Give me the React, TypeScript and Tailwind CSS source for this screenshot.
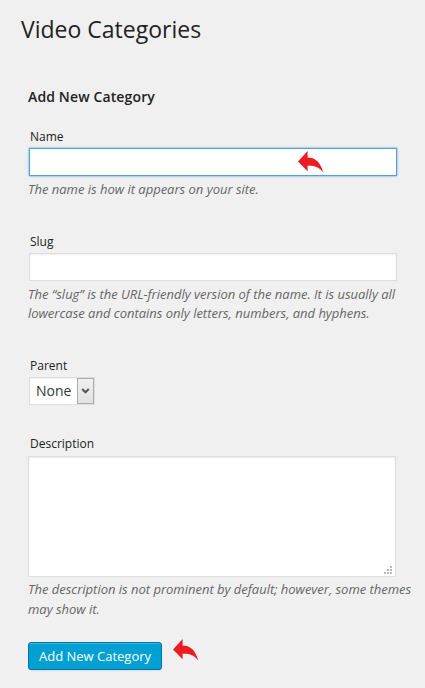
import type { ReactNode } from 'react';

function Arrow({ className }: { className: string }) {
  return (
    <svg className={className} width="26" height="22" viewBox="0 0 26 22" fill="#ed1c24">
      <path d="M0 10.5 L9.6 0 V6.4 C17 6.4 22.5 10.5 25.2 21.6 C21 16 16.5 14.6 9.6 14.8 V20.3 Z" />
    </svg>
  );
}

function Label({ htmlFor, children }: { htmlFor: string; children: ReactNode }) {
  return (
    <label htmlFor={htmlFor} className="ml-0.5 block h-5 text-[12px] leading-5 text-[#222]">
      {children}
    </label>
  );
}

function Hint({ children }: { children: ReactNode }) {
  return (
    <p className="text-[13px] leading-[19px] tracking-[-0.012px] whitespace-nowrap text-[#666] italic">
      {children}
    </p>
  );
}

export default function App() {
  return (
    <main className="h-[688px] w-[425px] overflow-hidden bg-[#f0f0f0] pl-7 font-['Open_Sans',sans-serif]">
      <h1 className="-ml-[7px] pt-[13px] text-[23px] leading-8 font-normal text-[#222]">
        Video Categories
      </h1>
      <h2 className="mt-[42px] text-[14px] leading-5 font-semibold tracking-[0.13px] text-[#222]">
        Add New Category
      </h2>

      <div className="mt-[20px]">
        <Label htmlFor="name">Name</Label>
        <div className="relative mt-[1px] ml-px w-[368px]">
          <input
            id="name"
            className="block h-7 w-full border border-[#5b9dd9] bg-white px-2 shadow-[0_0_2px_rgba(30,140,190,0.8)] outline-none"
          />
          <Arrow className="absolute top-[3px] left-[269px]" />
        </div>
        <div className="mt-[4px]">
          <Hint>The name is how it appears on your site.</Hint>
        </div>
      </div>

      <div className="mt-[33px]">
        <Label htmlFor="slug">Slug</Label>
        <input
          id="slug"
          className="mt-[1px] ml-px block h-7 w-[368px] border border-[#ddd] bg-white px-2 shadow-[inset_0_1px_2px_rgba(0,0,0,0.07)] outline-none"
        />
        <div className="mt-[4px]">
          <Hint>
            The “slug” is the URL-friendly version of the name. It is usually all
            <br />
            lowercase and contains only letters, numbers, and hyphens.
          </Hint>
        </div>
      </div>

      <div className="mt-[33px]">
        <Label htmlFor="parent">Parent</Label>
        <button
          id="parent"
          className="mt-[1px] ml-px flex h-7 w-[66px] border border-[#ddd] bg-white text-[14px] leading-[26px] text-[#32373c] shadow-[inset_0_1px_2px_rgba(0,0,0,0.07)]"
        >
          <span className="w-[47px] pl-[6px] text-left">None</span>
          <span className="flex h-[26px] w-[17px] items-center justify-center border border-[#acacac] bg-linear-to-b from-[#f0f0f0] to-[#e2e2e2]">
            <svg width="9" height="8" viewBox="0 0 9 8" fill="none" stroke="#555" strokeWidth="2">
              <path d="M1.2 2 L4.5 5.3 L7.8 2" />
            </svg>
          </span>
        </button>
      </div>

      <div className="mt-[29px]">
        <Label htmlFor="description">Description</Label>
        <div className="mt-[2px] flex h-[121px] w-[368px] items-end justify-end border border-[#ddd] bg-white pr-[3px] pb-[2px] shadow-[inset_0_1px_2px_rgba(0,0,0,0.07)]">
          <svg width="8" height="8" viewBox="0 0 8 8" fill="#b8b8b8" shapeRendering="crispEdges">
            <path d="M6 0h2v2h-2zM3 3h2v2h-2zM6 3h2v2h-2zM0 6h2v2h-2zM3 6h2v2h-2zM6 6h2v2h-2z" />
          </svg>
        </div>
        <div className="mt-[3px]">
          <Hint>The description is not prominent by default; however, some themes</Hint>
          <div className="mt-px">
            <Hint>may show it.</Hint>
          </div>
        </div>
      </div>

      <div className="mt-[23px] flex items-start">
        <button className="h-7 w-[134px] rounded-[3px] border border-[#0073aa] bg-[#00a0d2] text-[13px] leading-[26px] whitespace-nowrap text-white shadow-[inset_0_1px_0_rgba(120,200,230,0.5),0_1px_0_rgba(0,0,0,0.08)]">
          Add New Category
        </button>
        <Arrow className="-mt-[3px] ml-[11px]" />
      </div>
    </main>
  );
}
